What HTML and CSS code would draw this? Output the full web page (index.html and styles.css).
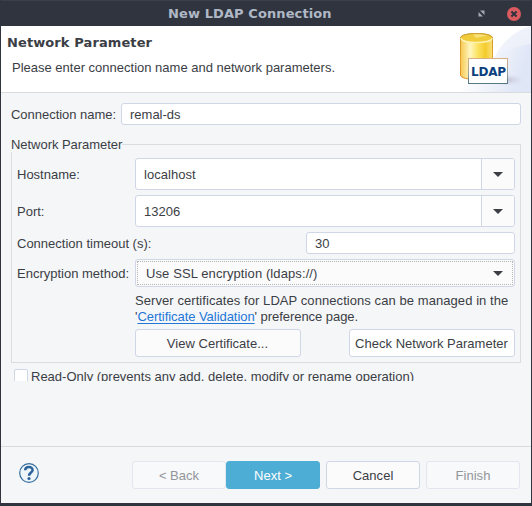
FILE: index.html
```html
<!DOCTYPE html>
<html lang="en">
<head>
<meta charset="utf-8">
<title>New LDAP Connection</title>
<link rel="stylesheet" href="styles.css">
</head>
<body>
<div class="window">
  <header class="titlebar">
    <span></span>
    <h1>New LDAP Connection</h1>
    <div class="controls">
      <svg width="7" height="7" viewBox="0 0 7 7"><path d="M2 0.5H6.5V5ZM0.5 2V6.5H5Z" fill="#a3aab6"/></svg>
      <svg width="14" height="14" viewBox="0 0 14 14"><circle cx="7" cy="7" r="7" fill="#d95a5f"/><path d="M4.4 4.400L9.600 9.600M9.600 4.400L4.400 9.600" stroke="#2f343f" stroke-width="2.100"/></svg>
    </div>
  </header>
  <section class="banner">
    <div class="banner-text">
      <h2>Network Parameter</h2>
      <p>Please enter connection name and network parameters.</p>
    </div>
    <svg class="banner-art" width="75" height="66" viewBox="0 0 75 66">
      <defs>
        <linearGradient id="gold" x1="0" x2="1"><stop offset="0" stop-color="#f6c850"/><stop offset=".3" stop-color="#fff6c0"/><stop offset=".52" stop-color="#fce468"/><stop offset=".78" stop-color="#f4cb2c"/><stop offset="1" stop-color="#fae07a"/></linearGradient>
        <linearGradient id="edge" x1="0" x2="0" y1="0" y2="1"><stop offset="0" stop-color="#c59a28"/><stop offset=".6" stop-color="#e9a232"/><stop offset="1" stop-color="#d98a28"/></linearGradient>
        <linearGradient id="frame" x1="0" x2="0" y1="0" y2="1"><stop offset="0" stop-color="#d8ae83"/><stop offset=".6" stop-color="#99a09a"/><stop offset="1" stop-color="#527985"/></linearGradient>
        <linearGradient id="sky" x1="0" x2="1" y1="0" y2=".3"><stop offset=".3" stop-color="#fff"/><stop offset=".75" stop-color="#ebeff9"/><stop offset="1" stop-color="#dfe6f6"/></linearGradient>
        <linearGradient id="glow" x1="0" x2="1"><stop offset="0" stop-color="#fff" stop-opacity="0"/><stop offset="1" stop-color="#fff" stop-opacity=".4"/></linearGradient>
        <radialGradient id="shade"><stop offset="0" stop-color="#a9a5b8" stop-opacity=".6"/><stop offset="1" stop-color="#c9c9dc" stop-opacity="0"/></radialGradient>
      </defs>
      <path d="M0 66C18 58 34 40 42 25C50 12 62 4 75 0V66Z" fill="url(#sky)"/>
      <path d="M38 30C48 24 60 20 75 18V0C60 4 49 13 38 30Z" fill="url(#glow)"/>
      <ellipse cx="51" cy="54" rx="16" ry="6" fill="url(#shade)"/>
      <path d="M4.5 12C4.5 6 36.500 6 36.500 12V49C36.500 55 4.500 55 4.500 49Z" fill="url(#gold)" stroke="url(#edge)"/>
      <path d="M5 12C5 18 36 18 36 12" fill="#f3d045" stroke="#fff2b0" stroke-width="1.400"/>
      <ellipse cx="20.500" cy="11.500" rx="15" ry="3.800" fill="#f0cb3a"/>
      <path d="M20.500 12L31 9.500C27 8.200 21 8 17 8.700Z" fill="#f8e07a"/>
      <path d="M4.500 12C5 6 36 6 36.500 12" fill="none" stroke="#cda12f"/>
      <rect x="12.500" y="32.500" width="39" height="25" fill="#fff" stroke="url(#frame)"/>
      <text x="15" y="50" textLength="35" class="ldap">LDAP</text>
    </svg>
  </section>
  <main class="content">
    <div class="row name-row">
      <label>Connection name:</label>
      <div class="field grow">remal-ds</div>
    </div>
    <fieldset class="group">
      <legend>Network Parameter</legend>
      <div class="row combo-row"><label>Hostname:</label><div class="combo"><span>localhost</span><i><svg width="10" height="5"><path d="M0 0H10L5 5Z" fill="#3b3e45"/></svg></i></div></div>
      <div class="row combo-row"><label>Port:</label><div class="combo"><span>13206</span><i><svg width="10" height="5"><path d="M0 0H10L5 5Z" fill="#3b3e45"/></svg></i></div></div>
      <div class="row timeout-row"><label>Connection timeout (s):</label><div class="field timeout">30</div></div>
      <div class="row method-row"><label>Encryption method:</label><div class="select"><div class="focus"><span>Use SSL encryption (ldaps://)</span><svg width="10" height="5"><path d="M0 0H10L5 5Z" fill="#3b3e45"/></svg></div></div></div>
      <p class="note">Server certificates for LDAP connections can be managed in the<br><span>'<a>Certificate Validation</a>' preference page.</span></p>
      <div class="actions"><button class="view">View Certificate...</button><button class="check">Check Network Parameter</button></div>
    </fieldset>
    <div class="readonly"><span class="box"></span><label>Read-Only (prevents any add, delete, modify or rename operation)</label></div>
  </main>
  <footer class="footer">
    <svg class="help" width="20" height="20" viewBox="0 0 20 20"><circle cx="10" cy="10" r="9.300" fill="#eef6fa" stroke="#356d9d" stroke-width="1.200"/><path d="M6.200 7.300C6.200 3.100 13.600 3 13.600 6.900C13.600 9.600 10.100 9.500 10.100 12.800" fill="none" stroke="#2c639a" stroke-width="2.500"/><circle cx="10" cy="15.500" r="1.600" fill="#2c639a"/></svg>
    <button class="off">&lt; Back</button><button class="primary">Next &gt;</button><button class="cancel">Cancel</button><button class="off finish">Finish</button>
  </footer>
</div>
</body>
</html>
```
FILE: styles.css
```css
* { box-sizing: border-box; }
body {
  margin: 0;
  background: #2f343f;
  color: #3b3e45;
  font: 13px/16px "Liberation Sans", Arial, sans-serif;
}
h1, h2, p { margin: 0; }
.window {
  display: flex;
  flex-direction: column;
  width: 532px;
  height: 506px;
  padding: 0 1px 3px;
  background: #2f343f;
}
.titlebar {
  display: grid;
  grid-template-columns: 167px auto 1fr;
  align-items: center;
  height: 26px;
  padding: 0 10px 0 0;
  border-top: 1px solid #3a3f4b;
}
.titlebar h1 {
  font: bold 13px/16px "DejaVu Sans", sans-serif;
  letter-spacing: 0.1px;
  color: #afb8c6;
}
.controls { display: flex; justify-content: flex-end; align-items: center; gap: 22px; }
.banner {
  display: flex;
  justify-content: space-between;
  height: 67px;
  background: #fff;
  border-bottom: 1px solid #d8dbe0;
}
.banner-text { padding: 9px 0 0 6px; }
.banner h2 { font: bold 13px/16px "DejaVu Sans", sans-serif; letter-spacing: 0.1px; }
.banner p { margin: 9px 0 0 5px; }
.ldap { font: bold 12px "DejaVu Sans", sans-serif; fill: #0b3f7e; }
.content { height: 353px; padding: 10px 10px 0; background: #f5f6f8; }
.row { display: flex; align-items: center; }
label { white-space: nowrap; }
.name-row { height: 22px; }
.name-row label { width: 110px; padding-top: 1px; letter-spacing: -0.03px; }
.field {
  height: 22px;
  padding: 3px 8px 0;
  border: 1px solid #cfd6e6;
  border-radius: 3px;
  background: #fff;
}
.grow { flex: 1; }
.group {
  height: 226px;
  margin: 12px 0 0;
  padding: 6px 5px 0;
  border: 1px solid #d9dce1;
  min-width: 0;
}
.group legend { height: 15px; margin-left: -6px; padding: 0; letter-spacing: -0.04px; }
.group .row label { width: 118px; padding-top: 2px; }
.combo-row { height: 32px; margin-bottom: 5px; }
.combo {
  display: flex;
  width: 380px;
  height: 32px;
  border: 1px solid #cfd6e6;
  border-radius: 3px;
  background: #fff;
  overflow: hidden;
}
.combo span { flex: 1; padding: 8px 8px 0; letter-spacing: 0.03px; }
.combo i {
  display: flex;
  align-items: center;
  justify-content: center;
  width: 33px;
  border-left: 1px solid #cfd6e6;
  background: #fbfbfc;
}
.timeout-row { height: 22px; margin-bottom: 5px; justify-content: space-between; }
.timeout { width: 209px; }
.method-row { height: 28px; }
.select {
  width: 380px;
  height: 28px;
  padding: 1px;
  border: 1px solid #cfd6e6;
  border-radius: 3px;
  background: #fbfbfc;
}
.focus {
  display: flex;
  align-items: center;
  justify-content: space-between;
  height: 24px;
  padding: 0 9px 0 8px;
  border: 1px dotted #b4b6b4;
}
.focus span { padding-top: 2px; letter-spacing: 0.1px; }
.note { margin: 6px 0 4px 118px; white-space: nowrap; letter-spacing: 0.07px; }
.note span { letter-spacing: -0.05px; }
.note a { color: #2277d8; text-decoration: underline; text-underline-offset: 2px; }
.actions { display: flex; justify-content: space-between; margin-left: 118px; }
button {
  height: 28px;
  padding: 1px 0 0;
  border: 1px solid #cfd6e6;
  border-radius: 3px;
  background: #fbfbfc;
  color: #3b3e45;
  font: inherit;
  letter-spacing: 0.02px;
  white-space: nowrap;
}
.actions button { width: 166px; }
.actions .view { padding-right: 1px; }
.actions .check { background: #fff; padding-right: 1px; }
.readonly { display: flex; height: 18px; padding: 6px 0 0 3px; gap: 3px; overflow: hidden; }
.box { flex: none; width: 14px; height: 14px; border: 1px solid #cfd6e6; border-radius: 2px; background: #fff; }
.footer {
  display: flex;
  align-items: flex-start;
  height: 57px;
  padding: 14px 11px 0 18px;
  border-top: 1px solid #d8dbe0;
  background: #f5f6f8;
}
.help { margin: 2px auto 0 0; }
.footer button { width: 94px; }
.footer .off { border-color: #e2e6ef; background: #f8f9fa; color: #929599; }
.footer .primary { border-color: #4dadd4; background: #4dadd4; color: #fff; }
.footer .cancel { margin: 0 6px; }
```
